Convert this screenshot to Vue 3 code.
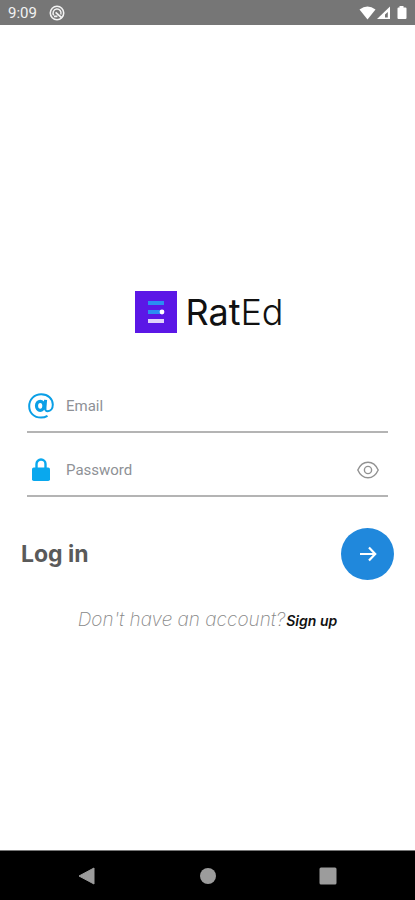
<script setup>
import { ref } from "vue";

const email = ref("");
const password = ref("");
const showPassword = ref(false);
</script>

<template>
  <div class="screen">
    <header class="status-bar">
      <span class="time">9:09</span>
      <svg class="app-icon" viewBox="0 0 16 16" aria-hidden="true">
        <circle cx="8" cy="8" r="6.7" fill="none" stroke="#f2f2f2" stroke-width="1.6" />
        <path d="M4.8 10.4A4 4 0 1 1 11.8 9.4" fill="none" stroke="#f2f2f2" stroke-width="1.5" />
        <path d="M6.6 7.4L13 13M5 11.4h3.4" fill="none" stroke="#f2f2f2" stroke-width="1.8" />
      </svg>
      <svg class="system-icons" viewBox="0 0 48 16" aria-hidden="true">
        <path d="M.5 4.6Q8.5-1.6 16.5 4.6L8.5 14.6Z" fill="#fff" />
        <path d="M31 1.5V14H18Z" fill="#fff" />
        <path d="M28.8 7V12.5H26V9.600Z" fill="#767676" />
        <path d="M40.5 1h4v1.5h2a1 1 0 0 1 1 1V13a1 1 0 0 1-1 1h-7a1 1 0 0 1-1-1V3.5a1 1 0 0 1 1-1h1z" fill="#fff" />
      </svg>
    </header>

    <main class="content">
      <h1 class="brand">
        <svg class="brand-mark" viewBox="0 0 42 42" aria-hidden="true">
          <rect width="42" height="42" fill="#5b17e6" />
          <rect x="13" y="10" width="16" height="4" fill="#2b8df2" />
          <rect x="13" y="19" width="13" height="4" fill="#2b8df2" />
          <circle cx="27" cy="21" r="2.4" fill="#fff" />
          <rect x="13" y="28" width="16" height="4" fill="#e0d2fb" />
        </svg>
        <span class="brand-name">Rat<span class="thin">Ed</span></span>
      </h1>

      <form @submit.prevent>
        <div class="field">
          <label class="field-icon" for="email" aria-label="Email">
            <svg class="at" viewBox="0 0 26 26" fill="none" stroke="#0a9fe6">
              <path d="M19.5 22.8C17.500 24 15.200 24.600 13 24.600C6 24.600 1.200 19.800 1.200 13.200C1.200 6.200 6.400 1.300 13.200 1.300C20 1.300 24.800 5.600 24.800 11.600C24.800 15.800 22.600 18.200 19.800 18.200C17.900 18.200 16.900 17 17.200 15" stroke-width="2" />
              <ellipse cx="12.200" cy="12.800" rx="3.700" ry="4.500" stroke-width="3.2" />
              <path d="M17.600 6.800L16.800 16.500" stroke-width="3" />
            </svg>
          </label>
          <input id="email" v-model="email" type="email" placeholder="Email" />
        </div>
        <div class="field">
          <label class="field-icon" for="password" aria-label="Password">
            <svg class="lock" viewBox="0 0 18 24">
              <path d="M4.5 11V6a4.5 4.5 0 0 1 9 0v5" fill="none" stroke="#09a8ee" stroke-width="2.4" />
              <rect y="9.5" width="18" height="13.5" rx="1.8" fill="#09a8ee" />
            </svg>
          </label>
          <input
            id="password"
            v-model="password"
            :type="showPassword ? 'text' : 'password'"
            placeholder="Password"
          />
          <button
            class="reveal"
            type="button"
            aria-label="Show password"
            @click="showPassword = !showPassword"
          >
            <svg viewBox="0 0 22 18" fill="none" stroke="#929292" stroke-width="1.4">
              <path d="M.8 9C3 4 6.5 1.2 11 1.2S19 4 21.2 9C19 14 15.5 16.8 11 16.8S3 14 .8 9z" />
              <circle cx="11" cy="9" r="3.6" />
            </svg>
          </button>
        </div>

        <div class="actions">
          <h2>Log in</h2>
          <button class="submit" type="submit" aria-label="Log in">
            <svg viewBox="0 0 18 16" fill="none" stroke="#fff" stroke-width="2.2">
              <path d="M1 8h15M10 1.6L16.2 8L10 14.4" />
            </svg>
          </button>
        </div>
      </form>

      <p class="signup">
        <span>Don't have an account?</span>
        <a href="#">Sign up</a>
      </p>
    </main>

    <nav class="nav-bar">
      <button type="button" aria-label="Back">
        <svg viewBox="0 0 18 18"><path d="M1 9L16 1V17Z" fill="#9c9c9c" stroke="#9c9c9c" stroke-linejoin="round" /></svg>
      </button>
      <button type="button" aria-label="Home">
        <svg viewBox="0 0 18 18"><circle cx="9" cy="9" r="8" fill="#9c9c9c" /></svg>
      </button>
      <button type="button" aria-label="Recent apps">
        <svg viewBox="0 0 18 18"><rect x=".5" y=".5" width="17" height="17" rx="1.5" fill="#9c9c9c" /></svg>
      </button>
    </nav>
  </div>
</template>

<style>
body {
  background: #fff;
}
</style>

<style scoped>
.screen {
  display: flex;
  flex-direction: column;
  min-height: 100vh;
  font-family: Inter, "Open Sans", sans-serif;
  background: #fff;
}

button {
  display: flex;
  align-items: center;
  justify-content: center;
  padding: 0;
  border: 0;
  background: none;
  cursor: pointer;
}

.status-bar {
  display: flex;
  align-items: center;
  height: 25px;
  padding: 0 8px;
  background: #767676;
}

.time {
  font-family: Roboto, sans-serif;
  font-size: 15px;
  line-height: 24px;
  color: #f2f2f2;
}

.app-icon {
  width: 16px;
  height: 16px;
  margin-left: 12px;
}

.system-icons {
  width: 48px;
  height: 16px;
  margin-left: auto;
}

.content {
  flex: 1;
  padding-top: 266px;
}

.brand {
  display: flex;
  align-items: center;
  justify-content: center;
  gap: 8px;
  margin: 0 0 46px;
  padding-left: 4px;
  font-size: 36px;
  font-weight: 400;
  line-height: 42px;
  color: #111;
}

.brand-mark {
  width: 42px;
  height: 42px;
}

.thin {
  font-weight: 300;
}

.field {
  display: flex;
  align-items: center;
  height: 50px;
  margin: 0 27px 10px;
  padding-top: 2px;
  border-bottom: 2px solid #b4b4b4;
}

.field-icon {
  display: flex;
  justify-content: center;
  width: 27px;
  margin-right: 12px;
}

.at {
  width: 26px;
  height: 26px;
}

.lock {
  width: 18px;
  height: 24px;
}

.field input {
  flex: 1;
  min-width: 0;
  padding: 0;
  border: 0;
  outline: 0;
  background: none;
  font-family: Roboto, sans-serif;
  font-size: 15px;
  line-height: 20px;
  color: #333;
}

.field input::placeholder {
  color: #8e9196;
  opacity: 1;
}

.reveal {
  width: 24px;
  height: 24px;
  margin-right: 8px;
}

.reveal svg {
  width: 22px;
  height: 18px;
}

.actions {
  display: flex;
  align-items: center;
  justify-content: space-between;
  padding: 21px 21px 0;
}

h2 {
  margin: 0;
  font-size: 23px;
  font-weight: 700;
  line-height: 28px;
  color: #5a5a5a;
}

.submit {
  width: 53px;
  height: 52px;
  border-radius: 50%;
  background: #2088dc;
}

.submit svg {
  width: 18px;
  height: 16px;
}

.signup {
  display: flex;
  align-items: baseline;
  justify-content: center;
  gap: 1px;
  margin: 28px 0 0;
  font-size: 19px;
  font-style: italic;
  font-weight: 200;
  line-height: 24px;
  color: #888;
}

.signup a {
  font-size: 14px;
  font-weight: 600;
  color: #111;
  text-decoration: none;
}

.nav-bar {
  display: flex;
  align-items: center;
  justify-content: space-between;
  height: 49px;
  padding: 0 78px;
  border-top: 1px solid #777;
  background: #000;
}

.nav-bar svg {
  width: 18px;
  height: 18px;
}
</style>
